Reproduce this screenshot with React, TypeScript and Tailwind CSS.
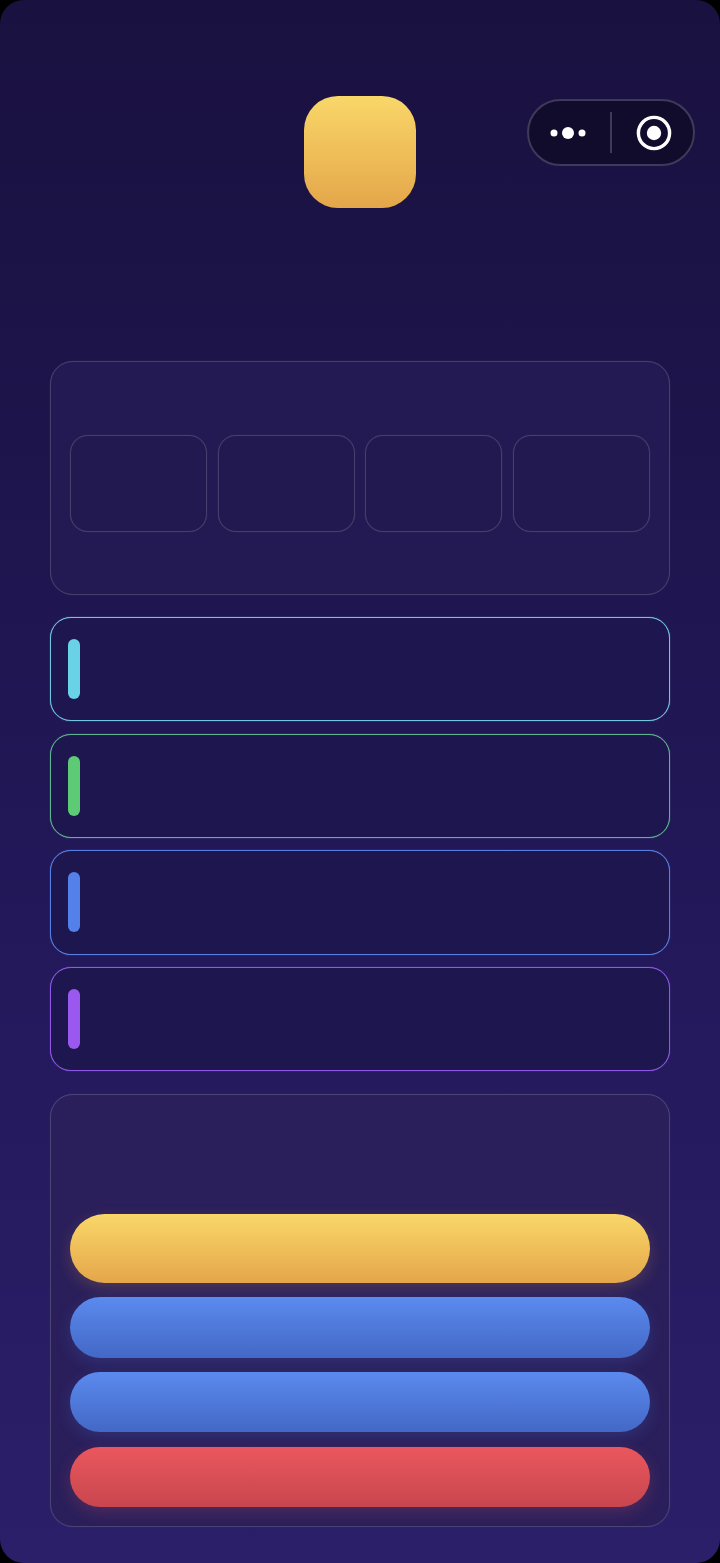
export default function App() {
  const cells = [0, 1, 2, 3];
  const buttonBase = "w-full rounded-full bg-gradient-to-b";
  return (
    <div className="h-[1563px] w-[720px] bg-black">
      <div className="relative flex h-full w-full flex-col rounded-[24px] bg-gradient-to-b from-[#19113f] via-[#211756] to-[#2b1f6a] px-[50px] pt-[96px]">
        <div className="absolute left-[527px] top-[99px] flex h-[67px] w-[168px] items-center rounded-full border-2 border-[#3f3a5a] bg-[#120c2c]">
          <div className="flex w-[81px] justify-center">
            <svg width="40" height="16" viewBox="0 0 40 16" className="-ml-[3px]">
              <circle cx="6" cy="8" r="3.5" fill="#ffffff" />
              <circle cx="20" cy="8" r="6" fill="#ffffff" />
              <circle cx="34" cy="8" r="3.5" fill="#ffffff" />
            </svg>
          </div>
          <div className="h-[41px] w-[2px] bg-[#3f3a5a]" />
          <div className="flex flex-1 justify-center">
            <svg width="36" height="36" viewBox="0 0 36 36" className="ml-[2px]">
              <circle cx="18" cy="18" r="15.6" fill="none" stroke="#ffffff" strokeWidth="3.4" />
              <circle cx="18" cy="18" r="7.2" fill="#ffffff" />
            </svg>
          </div>
        </div>

        <div className="mx-auto h-[112px] w-[112px] rounded-[34px] bg-gradient-to-b from-[#f9d769] to-[#e4a64a]" />

        <div className="mt-[153px] flex h-[234px] items-start rounded-[23px] border border-[#453f6c] bg-[#241a53] px-[19px] pt-[73px] shadow-[0_0_1px_#453f6c]">
          <div className="grid w-full grid-cols-4 gap-[10.9px]">
            {cells.map((c) => (
              <div key={c} className="h-[97px] rounded-[18px] border border-[#453f6c] bg-[#231951] shadow-[0_0_1px_#453f6c]" />
            ))}
          </div>
        </div>

        <div className="mt-[22px] flex flex-col gap-[12.5px]">
          <Row border="border-[#72c6e2] shadow-[0_0_1px_#72c6e2]" bar="bg-[#69d2e7]" />
          <Row border="border-[#5fb58f] shadow-[0_0_1px_#5fb58f]" bar="bg-[#5dcb76]" />
          <Row border="border-[#5880e4] shadow-[0_0_1px_#5880e4]" bar="bg-[#5480ea]" />
          <Row border="border-[#9058e6] shadow-[0_0_1px_#9058e6]" bar="bg-[#9b58ee]" />
        </div>

        <div className="mt-[22.7px] flex h-[433px] flex-col rounded-[23px] border border-[#4a4475] bg-[#2a1f5b] px-[19px] pt-[119px] shadow-[0_0_1px_#4a4475]">
          <div className={`${buttonBase} h-[69px] from-[#f9d769] to-[#e4a64a] shadow-[0_5px_16px_rgba(228,166,74,0.2)]`} />
          <div className={`${buttonBase} mt-[14px] h-[61px] from-[#5b8aee] to-[#4368c6] shadow-[0_5px_16px_rgba(84,128,234,0.18)]`} />
          <div className={`${buttonBase} mt-[14px] h-[60.5px] from-[#5b8aee] to-[#4368c6] shadow-[0_5px_16px_rgba(84,128,234,0.18)]`} />
          <div className={`${buttonBase} mt-[14.5px] h-[60.5px] from-[#ea575d] to-[#c9464e] shadow-[0_5px_16px_rgba(239,90,96,0.2)]`} />
        </div>
      </div>
    </div>
  );
}

function Row({ border, bar }: { border: string; bar: string }) {
  return (
    <div className={`flex h-[104.2px] items-center rounded-[21px] border bg-[#1e164e] pl-[16.5px] ${border}`}>
      <div className={`h-[60px] w-[12px] rounded-full ${bar}`} />
    </div>
  );
}
